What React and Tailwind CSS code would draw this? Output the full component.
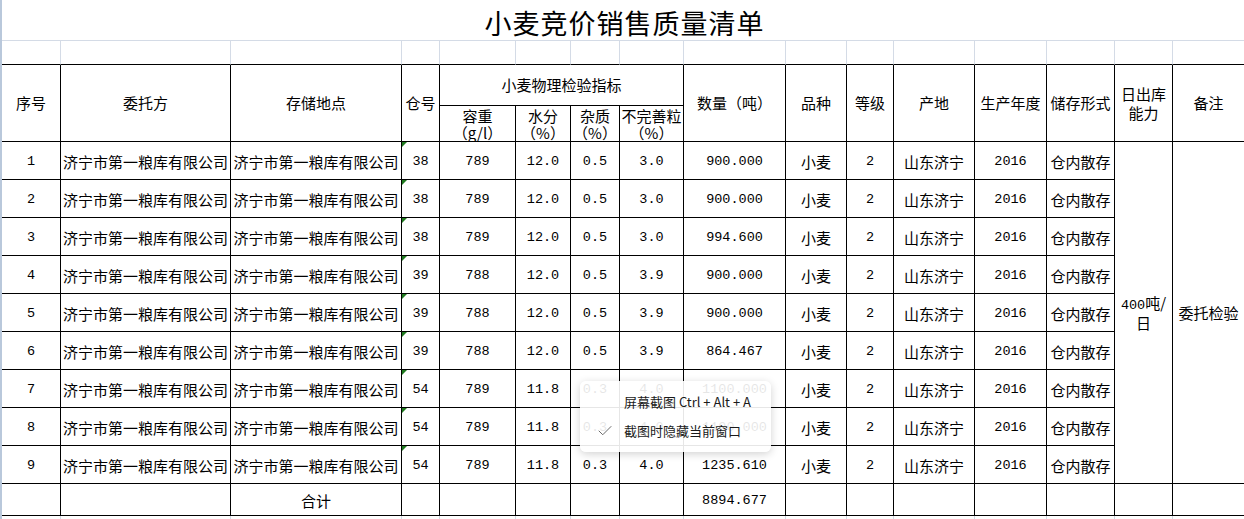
import { Check } from 'lucide-react';
import clsx from 'clsx';

const cjk = "font-['Noto_Sans_CJK_SC','Noto_Sans',sans-serif]";
const mono = "font-['Liberation_Mono','Noto_Sans_CJK_SC',monospace]";

const rows = [
  ['1', '38', '789', '12.0', '0.5', '3.0', '900.000'],
  ['2', '38', '789', '12.0', '0.5', '3.0', '900.000'],
  ['3', '38', '789', '12.0', '0.5', '3.0', '994.600'],
  ['4', '39', '788', '12.0', '0.5', '3.9', '900.000'],
  ['5', '39', '788', '12.0', '0.5', '3.9', '900.000'],
  ['6', '39', '788', '12.0', '0.5', '3.9', '864.467'],
  ['7', '54', '789', '11.8', '0.3', '4.0', '1100.000'],
  ['8', '54', '789', '11.8', '0.3', '4.0', '1100.000'],
  ['9', '54', '789', '11.8', '0.3', '4.0', '1235.610'],
];

// plain bordered cell of the sheet
function Cell({ children, className, num }) {
  return (
    <div
      className={clsx(
        'border-r border-b border-black flex items-center justify-center text-center text-black whitespace-nowrap overflow-hidden',
        num ? `${mono} text-[13.5px] leading-[18px] pt-[3px]` : `${cjk} text-[15px] leading-[18px]`,
        className
      )}
    >
      {children}
    </div>
  );
}

function GridLine({ top }) {
  return (
    <div
      className={clsx(
        'border-r border-r-[#d4dbe6]',
        top && 'border-b border-b-black'
      )}
    />
  );
}

export default function App() {
  return (
    <div className="relative w-[1244px] h-[519px] overflow-hidden bg-white border-l-2 border-[#b9c8db]">
      <div className="grid grid-cols-[59px_170px_171px_38px_76px_55px_49px_64px_102px_61px_47px_81px_72px_68px_58px_72px] grid-rows-[41px_24px_41px_36px_repeat(9,38px)_32px_20px]">
        {/* title */}
        <div className={`col-span-full border-b border-[#d4dbe6] flex items-center justify-center pt-[6px] pl-[2px] text-[27px] font-normal tracking-[1px] text-black ${cjk}`}>
          小麦竞价销售质量清单
        </div>

        {/* blank row */}
        {Array.from({ length: 16 }).map((_, i) => (
          <GridLine key={'b' + i} top />
        ))}

        {/* header */}
        <Cell className="row-span-2">序号</Cell>
        <Cell className="row-span-2">委托方</Cell>
        <Cell className="row-span-2">存储地点</Cell>
        <Cell className="row-span-2">仓号</Cell>
        <Cell className="col-span-4">小麦物理检验指标</Cell>
        <Cell className="row-span-2">数量（吨）</Cell>
        <Cell className="row-span-2">品种</Cell>
        <Cell className="row-span-2">等级</Cell>
        <Cell className="row-span-2">产地</Cell>
        <Cell className="row-span-2">生产年度</Cell>
        <Cell className="row-span-2">储存形式</Cell>
        <Cell className="row-span-2 !leading-[19px]">
          日出库<br />能力
        </Cell>
        <Cell className="row-span-2">备注</Cell>
        <Cell className="!leading-[17px]">
          容重<br />（g/l）
        </Cell>
        <Cell className="!leading-[17px]">
          水分<br />（%）
        </Cell>
        <Cell className="!leading-[17px]">
          杂质<br />（%）
        </Cell>
        <Cell className="!leading-[17px]">
          不完善粒<br />（%）
        </Cell>

        {/* data */}
        {rows.map((r, i) => [
          <Cell key={i + 'a'} num>{r[0]}</Cell>,
          <Cell key={i + 'b'} className="pt-[3px]">济宁市第一粮库有限公司</Cell>,
          <Cell key={i + 'c'} className="pt-[3px]">济宁市第一粮库有限公司</Cell>,
          <Cell key={i + 'd'} num className="relative">
            <span className="absolute top-0 left-0 w-0 h-0 border-t-[5px] border-r-[5px] border-t-[#1f7a1f] border-r-transparent" />
            {r[1]}
          </Cell>,
          <Cell key={i + 'e'} num>{r[2]}</Cell>,
          <Cell key={i + 'f'} num>{r[3]}</Cell>,
          <Cell key={i + 'g'} num>{r[4]}</Cell>,
          <Cell key={i + 'h'} num>{r[5]}</Cell>,
          <Cell key={i + 'i'} num>{r[6]}</Cell>,
          <Cell key={i + 'j'} className="pt-[3px]">小麦</Cell>,
          <Cell key={i + 'k'} num>2</Cell>,
          <Cell key={i + 'l'} className="pt-[3px]">山东济宁</Cell>,
          <Cell key={i + 'm'} num>2016</Cell>,
          <Cell key={i + 'n'} className="pt-[3px]">仓内散存</Cell>,
          i === 0 && (
            <Cell key="cap" className="row-span-9 !leading-[17px]">
              <span>
                <span className={mono + ' text-[13.5px]'}>400</span>吨/<br />日
              </span>
            </Cell>
          ),
          i === 0 && (
            <Cell key="note" className="row-span-9">委托检验</Cell>
          ),
        ])}

        {/* total */}
        <Cell />
        <Cell />
        <Cell className="pt-[2px]">合计</Cell>
        <Cell />
        <Cell />
        <Cell />
        <Cell />
        <Cell />
        <Cell num>8894.677</Cell>
        <Cell />
        <Cell />
        <Cell />
        <Cell />
        <Cell />
        <Cell />
        <Cell />

        {/* below the table */}
        {Array.from({ length: 16 }).map((_, i) => (
          <GridLine key={'e' + i} />
        ))}
      </div>

      {/* screenshot context menu */}
      <div className={`absolute left-[578px] top-[381px] w-[191px] h-[71px] rounded-md bg-white/90 shadow-[0_2px_8px_rgba(0,0,0,0.18)] text-[13px] text-[#1a1a1a] ${cjk}`}>
        <div className="flex items-center h-[36px] pt-[6px] pl-[44px]">屏幕截图 Ctrl + Alt + A</div>
        <div className="flex items-center h-[28px] pl-[16px]">
          <Check className="w-[18px] h-[18px] text-[#666] mr-[10px]" strokeWidth={1.3} />
          截图时隐藏当前窗口
        </div>
      </div>
    </div>
  );
}
